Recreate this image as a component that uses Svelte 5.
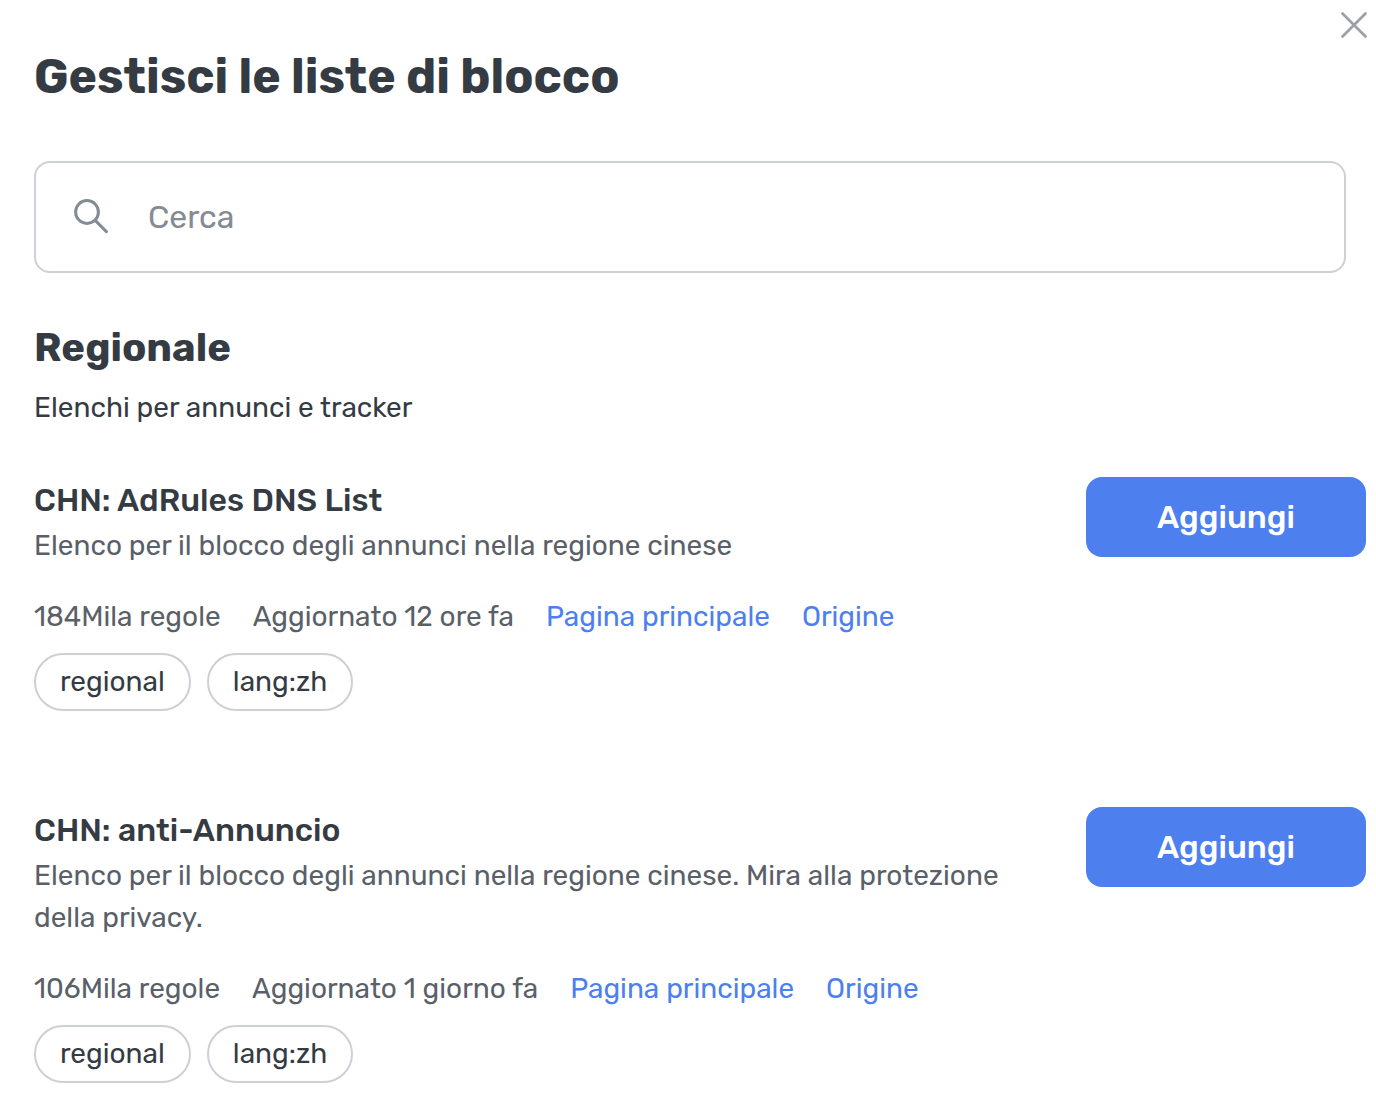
<script lang="ts">
	// Modal for searching and adding blocklists

	interface Blocklist {
		id: string;
		name: string;
		description: string;
		rules: string;
		updated: string;
		tags: string[];
	}

	const blocklists: Blocklist[] = [
		{
			id: 'adrules',
			name: 'CHN: AdRules DNS List',
			description: 'Elenco per il blocco degli annunci nella regione cinese',
			rules: '184Mila regole',
			updated: 'Aggiornato 12 ore fa',
			tags: ['regional', 'lang:zh']
		},
		{
			id: 'anti-ad',
			name: 'CHN: anti-Annuncio',
			description:
				'Elenco per il blocco degli annunci nella regione cinese. Mira alla protezione della privacy.',
			rules: '106Mila regole',
			updated: 'Aggiornato 1 giorno fa',
			tags: ['regional', 'lang:zh']
		}
	];

	let query = $state('');
	let open = $state(true);

	let visible = $derived(
		blocklists.filter((list) => list.name.toLowerCase().includes(query.trim().toLowerCase()))
	);
</script>

{#if open}
	<main class="modal">
		<header class="modal-header">
			<h1>Gestisci le liste di blocco</h1>
			<button type="button" class="close" aria-label="Chiudi" onclick={() => (open = false)}>
				<svg viewBox="0 0 28 28" aria-hidden="true">
					<path d="M2.5 2.5L25.5 25.5M25.5 2.5L2.5 25.5" />
				</svg>
			</button>
		</header>

		<label class="search">
			<svg viewBox="0 0 36 36" aria-hidden="true">
				<circle cx="15" cy="13" r="11.4" />
				<path d="M23.2 21.4L34.4 32.6" />
			</svg>
			<input type="text" placeholder="Cerca" aria-label="Cerca" bind:value={query} />
		</label>

		<section>
			<h2>Regionale</h2>
			<p class="subtitle">Elenchi per annunci e tracker</p>

			<ul class="lists">
				{#each visible as list (list.id)}
					<li class="list">
						<div class="list-body">
							<h3>{list.name}</h3>
							<p class="description">{list.description}</p>
							<div class="meta">
								<span>{list.rules}</span>
								<span>{list.updated}</span>
								<a href="#{list.id}">Pagina principale</a>
								<a href="#{list.id}-source">Origine</a>
							</div>
							<div class="tags">
								{#each list.tags as tag}
									<span class="tag">{tag}</span>
								{/each}
							</div>
						</div>
						<button type="button" class="add">Aggiungi</button>
					</li>
				{/each}
			</ul>
		</section>
	</main>
{/if}

<style>
	:global(body) {
		background: #fff;
	}

	.modal {
		box-sizing: border-box;
		padding: 8px 10px 14px 34px;
		font-family: Rubik, Roboto, sans-serif;
		font-size: 28px;
		line-height: 42px;
		color: #353b43;
	}

	h1,
	h2,
	h3,
	p,
	ul {
		margin: 0;
		padding: 0;
	}

	.modal-header {
		display: flex;
		align-items: flex-start;
		justify-content: space-between;
	}

	h1 {
		padding-top: 41px;
		font-size: 48px;
		line-height: 56px;
		font-weight: 700;
	}

	.close {
		display: flex;
		padding: 3px 0;
		margin-right: -2px;
		border: 0;
		background: none;
		cursor: pointer;
	}

	.close svg {
		width: 28px;
		height: 28px;
	}

	.close path {
		fill: none;
		stroke: #9ba1a8;
		stroke-width: 2.8;
		stroke-linecap: round;
	}

	.search {
		display: flex;
		align-items: center;
		gap: 40px;
		box-sizing: border-box;
		height: 112px;
		margin: 56px 20px 0 0;
		padding: 0 36px;
		border: 2px solid #cdd0d5;
		border-radius: 16px;
	}

	.search svg {
		flex: none;
		width: 36px;
		height: 36px;
		fill: none;
		stroke: #848b93;
		stroke-width: 3;
		stroke-linecap: round;
	}

	.search input {
		flex: 1;
		min-width: 0;
		padding: 0;
		border: 0;
		outline: none;
		background: none;
		font: inherit;
		font-size: 32px;
		color: inherit;
	}

	.search input::placeholder {
		color: #848b93;
		opacity: 1;
	}

	h2 {
		margin-top: 51px;
		font-size: 40px;
		line-height: 48px;
		font-weight: 700;
	}

	.subtitle {
		margin-top: 15px;
	}

	.lists {
		display: flex;
		flex-direction: column;
		gap: 96px;
		margin-top: 48px;
		list-style: none;
	}

	.list {
		display: flex;
		align-items: flex-start;
		justify-content: space-between;
		gap: 64px;
	}

	h3 {
		font-size: 32px;
		line-height: 46px;
		font-weight: 500;
	}

	.description {
		margin-top: 2px;
		color: #5a6068;
	}

	.meta {
		display: flex;
		flex-wrap: wrap;
		column-gap: 32px;
		margin-top: 29px;
		color: #5a6068;
	}

	.meta a {
		color: #4d80ee;
		text-decoration: none;
	}

	.tags {
		display: flex;
		flex-wrap: wrap;
		gap: 16px;
		margin-top: 15px;
	}

	.tag {
		padding: 6px 24px;
		border: 2px solid #cdd0d5;
		border-radius: 29px;
	}

	.add {
		flex: none;
		width: 280px;
		height: 80px;
		border: 0;
		border-radius: 16px;
		background: #4d80ee;
		font: inherit;
		font-size: 32px;
		font-weight: 500;
		color: #fff;
		cursor: pointer;
	}
</style>
